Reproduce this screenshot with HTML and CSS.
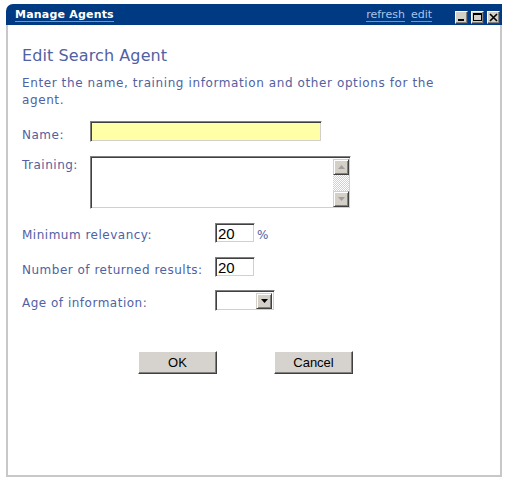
FILE: index.html
```html
<!DOCTYPE html>
<html>
<head>
<meta charset="utf-8">
<link rel="stylesheet" href="styles.css">
</head>
<body>
<div class="window">
  <div class="titlebar">
    <span class="title">Manage Agents</span>
    <span class="links"><a class="tlink">refresh</a><a class="tlink">edit</a></span>
    <span class="wbtns">
      <span class="wbtn"><svg width="11" height="11" viewBox="0 0 11 11"><rect x="2" y="7" width="6" height="2" fill="#000"/></svg></span>
      <span class="wbtn"><svg width="11" height="11" viewBox="0 0 11 11"><rect x="1.5" y="1.5" width="8" height="7" fill="none" stroke="#000"/><rect x="1" y="1" width="9" height="2" fill="#000"/></svg></span>
      <span class="wbtn"><svg width="11" height="11" viewBox="0 0 11 11"><path d="M2 2 L9 9 M9 2 L2 9" stroke="#000" stroke-width="1.6"/></svg></span>
    </span>
  </div>
  <div class="body">
    <h1 class="heading">Edit Search Agent</h1>
    <p class="intro">Enter the name, training information and other options for the agent.</p>

    <div class="row row-name">
      <label class="lbl lbl-short lbl-name">Name:</label>
      <input class="field field-name" type="text">
    </div>

    <div class="row row-training">
      <label class="lbl lbl-short lbl-training">Training:</label>
      <div class="ta">
        <textarea class="ta-text"></textarea>
        <div class="sbar">
          <span class="sbtn"><svg width="7" height="4" viewBox="0 0 7 4"><path d="M0 4 L3.5 0 L7 4 Z" fill="#a0a0a0"/></svg></span>
          <span class="strack"></span>
          <span class="sbtn"><svg width="7" height="4" viewBox="0 0 7 4"><path d="M0 0 L3.5 4 L7 0 Z" fill="#a0a0a0"/></svg></span>
        </div>
      </div>
    </div>

    <div class="row row-rel">
      <label class="lbl lbl-long lbl-rel">Minimum relevancy:</label>
      <input class="field field-num" type="text" value="20">
      <span class="lbl pct">%</span>
    </div>

    <div class="row row-results">
      <label class="lbl lbl-long">Number of returned results:</label>
      <input class="field field-num" type="text" value="20">
    </div>

    <div class="row row-age">
      <label class="lbl lbl-long">Age of information:</label>
      <div class="sel">
        <span class="sel-val"></span>
        <span class="sel-btn"><svg width="7" height="4" viewBox="0 0 7 4"><path d="M0 0 L3.5 4 L7 0 Z" fill="#000"/></svg></span>
      </div>
    </div>

    <div class="actions">
      <button class="btn">OK</button>
      <button class="btn">Cancel</button>
    </div>
  </div>
</div>
</body>
</html>
```

FILE: styles.css
```css
html, body {
  margin: 0;
  padding: 0;
  background: #ffffff;
}

.window {
  margin: 4px 0 0 6px;
  width: 496px;
  font-family: "DejaVu Sans", Verdana, sans-serif;
}

.titlebar {
  height: 21px;
  background: #003a82;
  border-top-left-radius: 7px;
  display: flex;
  align-items: flex-start;
  padding: 0 2px 0 9px;
  box-sizing: border-box;
}

.title {
  margin-top: 5px;
  font-size: 11px;
  line-height: 12px;
  font-weight: bold;
  letter-spacing: 0.2px;
  color: #ffffff;
  border-bottom: 1px solid #7f93b8;
}

.links {
  margin-left: auto;
  display: flex;
  gap: 6px;
  margin-top: 5px;
}

.tlink {
  font-size: 11px;
  line-height: 12px;
  color: #a9c3ea;
  border-bottom: 1px solid #7f93b8;
  text-decoration: none;
}

.wbtns {
  display: flex;
  gap: 3px;
  margin-left: 23px;
  margin-top: 7px;
}

.wbtn {
  width: 13px;
  height: 13px;
  box-sizing: border-box;
  background: #d4d0c8;
  border: 1px solid;
  border-color: #ffffff #404040 #404040 #ffffff;
  box-shadow: inset -1px -1px #808080;
  display: flex;
  align-items: center;
  justify-content: center;
}

.wbtn svg {
  display: block;
}

.body {
  height: 452px;
  box-sizing: border-box;
  border: 2px solid #c8c8c8;
  border-top: none;
  padding: 21px 14px 0 14px;
}

.heading {
  margin: 0;
  font-size: 16px;
  line-height: 19px;
  font-weight: normal;
  letter-spacing: 0.1px;
  color: #5161a3;
}

.intro {
  margin: 10px 0 12px 0;
  max-width: 440px;
  font-size: 12px;
  line-height: 17px;
  letter-spacing: 0.6px;
  color: #5161a3;
}

.row {
  display: flex;
  align-items: flex-start;
}

.row-training { margin-top: 13px; }
.row-rel { margin-top: 14px; }
.row-results { margin-top: 14px; }
.row-age { margin-top: 12px; }

.lbl {
  flex: none;
  font-size: 12px;
  line-height: 15px;
  letter-spacing: 0.5px;
  color: #5161a3;
  padding-top: 6px;
}

.lbl-short { width: 68px; }
.lbl-long { width: 193px; }
.lbl-name { padding-top: 7px; }
.lbl-training { padding-top: 2px; }
.lbl-rel { padding-top: 5px; }
.pct { padding-top: 5px; margin-left: 2px; }

.field {
  box-sizing: border-box;
  margin: 0;
  border: 1px solid;
  border-color: #808080 #ffffff #ffffff #808080;
  box-shadow: inset 1px 1px #404040, inset -1px -1px #d4d0c8;
  outline: none;
  font-family: "Liberation Sans", Arial, sans-serif;
  font-size: 15px;
  color: #000000;
  padding: 0 0 0 2px;
}

.field-name {
  width: 232px;
  height: 21px;
  background: #ffffa8;
}

.field-num {
  width: 40px;
  height: 20px;
  background: #ffffff;
}

.ta {
  width: 261px;
  height: 53px;
  box-sizing: border-box;
  border: 1px solid;
  border-color: #808080 #ffffff #ffffff #808080;
  box-shadow: inset 1px 1px #404040, inset -1px -1px #d4d0c8;
  padding: 2px 1px 1px 2px;
  display: flex;
}

.ta-text {
  flex: 1;
  border: none;
  margin: 0;
  padding: 0;
  resize: none;
  outline: none;
  background: #ffffff;
}

.sbar {
  width: 16px;
  display: flex;
  flex-direction: column;
}

.sbtn {
  width: 16px;
  height: 16px;
  box-sizing: border-box;
  background: #d4d0c8;
  border: 1px solid;
  border-color: #d4d0c8 #404040 #404040 #d4d0c8;
  box-shadow: inset 1px 1px #ffffff, inset -1px -1px #808080;
  display: flex;
  align-items: center;
  justify-content: center;
}

.sbtn svg { display: block; }

.strack {
  flex: 1;
  background-color: #ffffff;
  background-image: repeating-conic-gradient(#d4d0c8 0 25%, #ffffff 0 50%);
  background-size: 2px 2px;
}

.sel {
  width: 60px;
  height: 21px;
  box-sizing: border-box;
  border: 1px solid;
  border-color: #808080 #ffffff #ffffff #808080;
  box-shadow: inset 1px 1px #404040, inset -1px -1px #d4d0c8;
  padding: 2px 2px 1px 2px;
  display: flex;
  background: #ffffff;
}

.sel-val { flex: 1; }

.sel-btn {
  width: 16px;
  box-sizing: border-box;
  background: #d4d0c8;
  border: 1px solid;
  border-color: #d4d0c8 #404040 #404040 #d4d0c8;
  box-shadow: inset 1px 1px #ffffff, inset -1px -1px #808080;
  display: flex;
  align-items: center;
  justify-content: center;
}

.sel-btn svg { display: block; }

.actions {
  display: flex;
  gap: 57px;
  margin: 40px 0 0 116px;
}

.btn {
  width: 79px;
  height: 23px;
  box-sizing: border-box;
  margin: 0;
  padding: 0;
  background: #d6d3ce;
  border: 1px solid;
  border-color: #ffffff #404040 #404040 #ffffff;
  box-shadow: inset -1px -1px #808080;
  font-family: "Liberation Sans", Arial, sans-serif;
  font-size: 13px;
  color: #000000;
}
```
